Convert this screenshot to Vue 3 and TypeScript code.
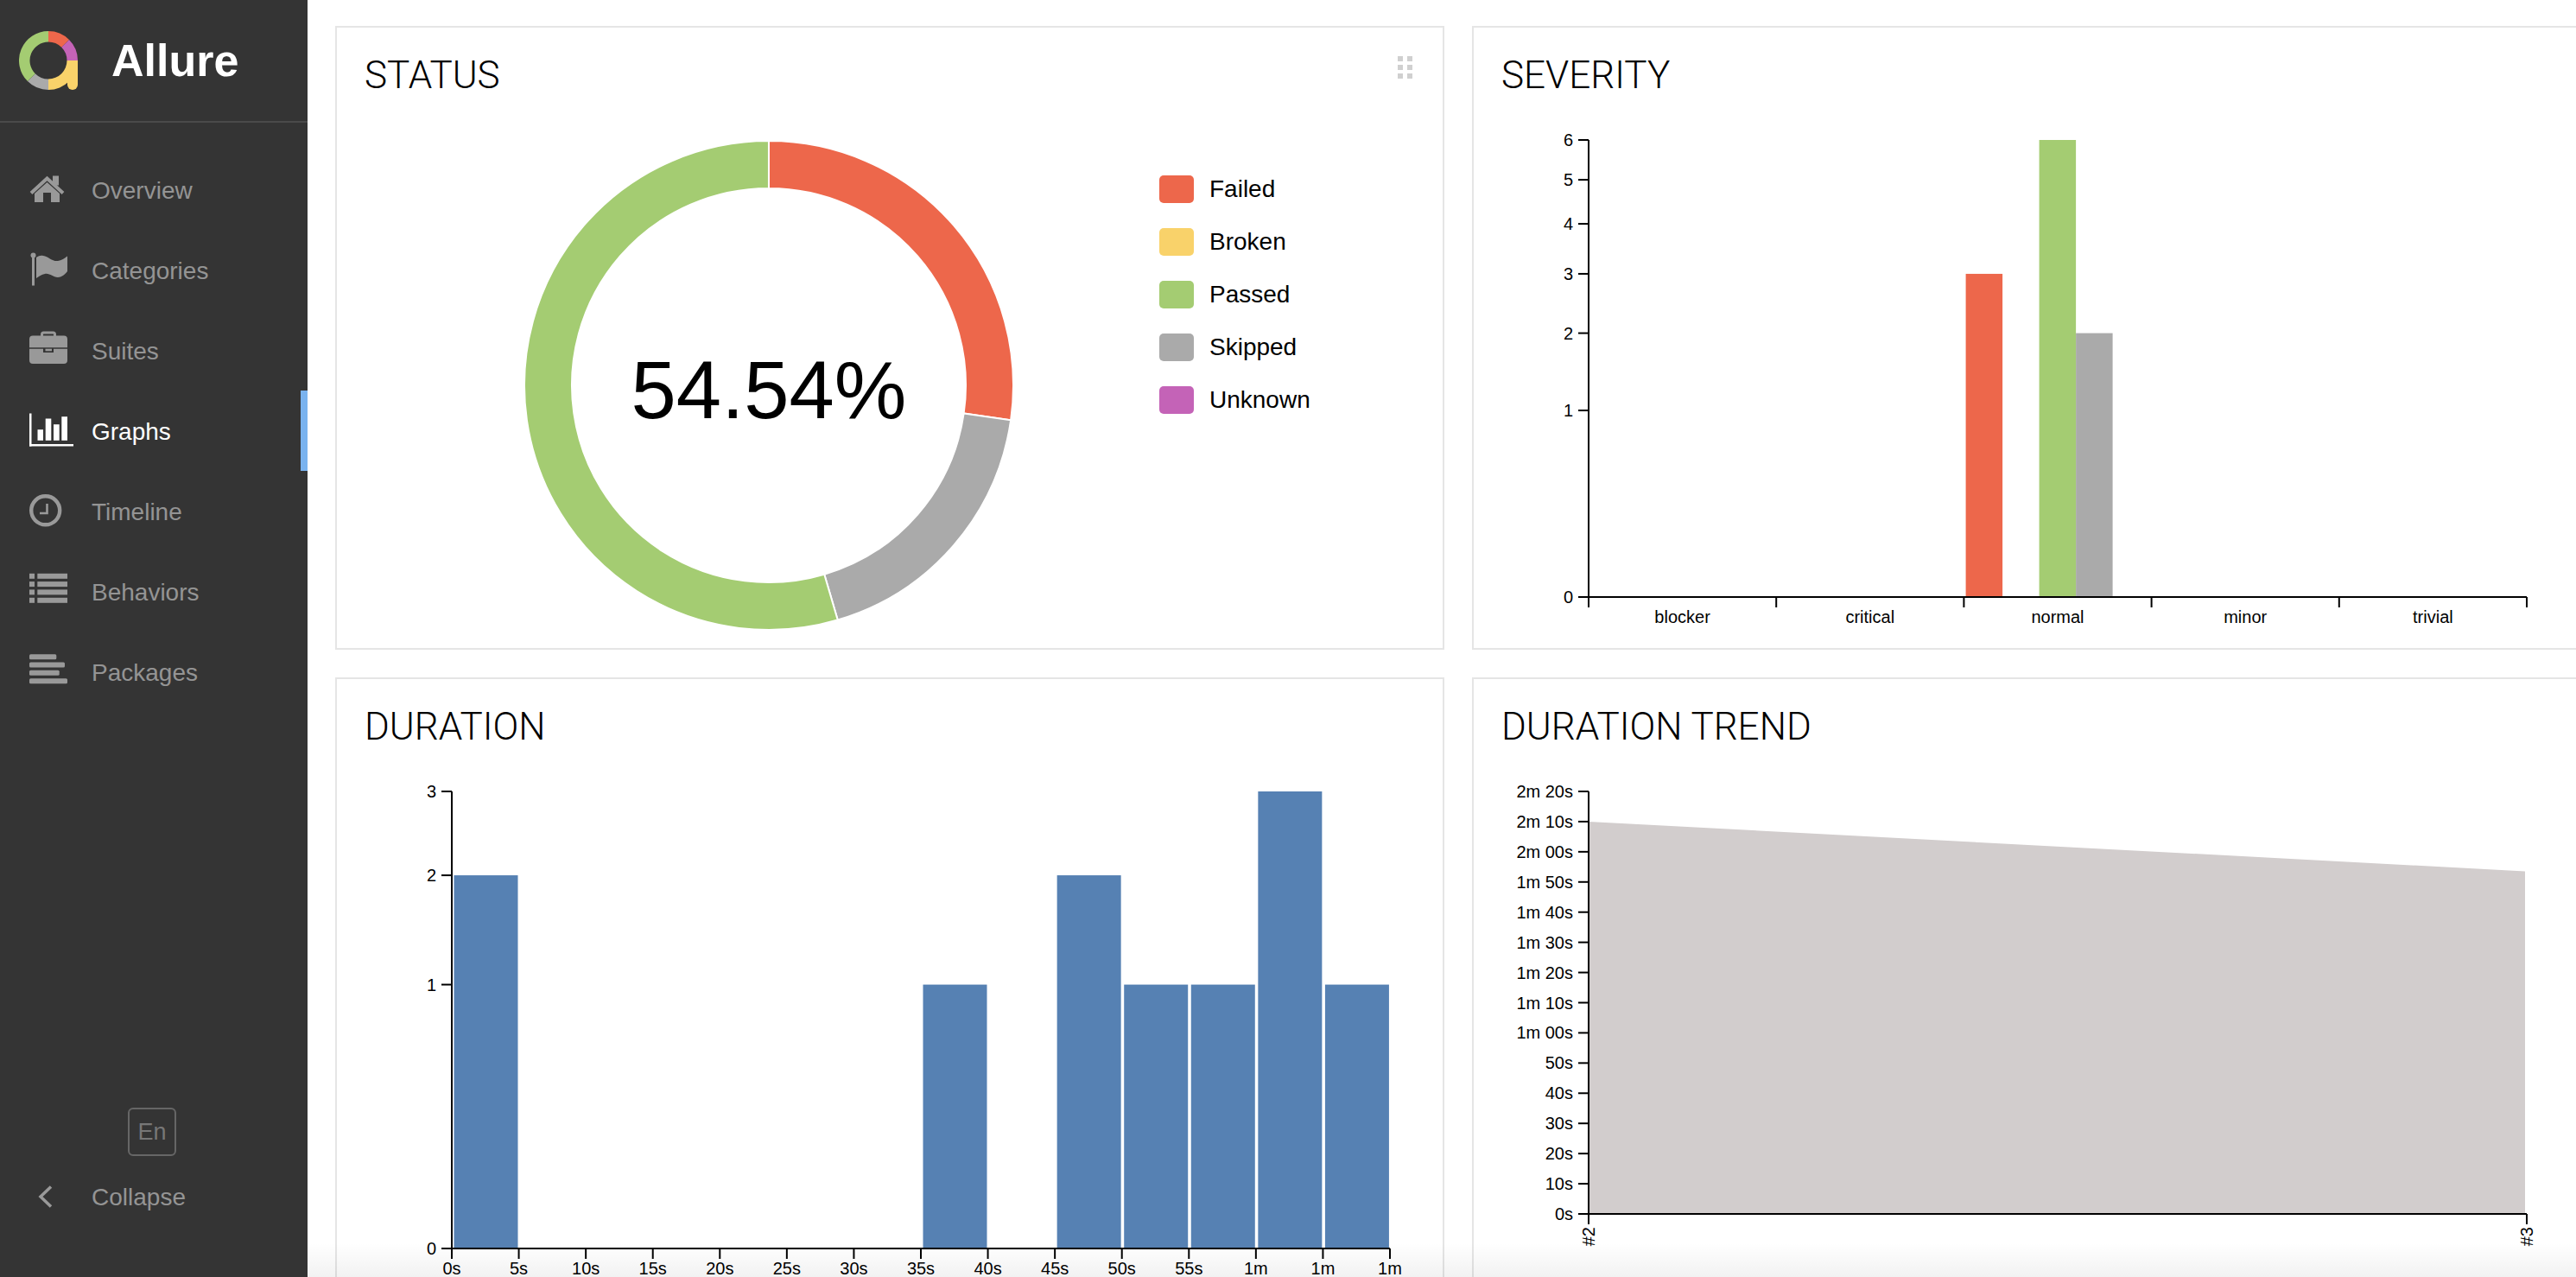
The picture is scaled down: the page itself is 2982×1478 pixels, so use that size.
<script setup lang="ts">
interface Tick {
  y: number
  label: string
}

const CHART_LEFT = 133
const CHART_WIDTH = 1086
const CHART_TOP = 30

const colors = {
  failed: '#ed674b',
  broken: '#f9d26a',
  passed: '#a4cc72',
  skipped: '#aaaaaa',
  unknown: '#c463b7'
}

const navItems = [
  { name: 'Overview', icon: 'home' },
  { name: 'Categories', icon: 'flag' },
  { name: 'Suites', icon: 'suitcase' },
  { name: 'Graphs', icon: 'graph' },
  { name: 'Timeline', icon: 'clock' },
  { name: 'Behaviors', icon: 'list' },
  { name: 'Packages', icon: 'packages' }
]

const legend = [
  { name: 'Failed', color: colors.failed },
  { name: 'Broken', color: colors.broken },
  { name: 'Passed', color: colors.passed },
  { name: 'Skipped', color: colors.skipped },
  { name: 'Unknown', color: colors.unknown }
]

// ring slice, angles in degrees clockwise from the top
const arc = (cx: number, cy: number, r: number, inner: number, from: number, to: number) => {
  const pt = (rad: number, deg: number) => {
    const a = (deg * Math.PI) / 180
    return `${(cx + rad * Math.sin(a)).toFixed(2)} ${(cy - rad * Math.cos(a)).toFixed(2)}`
  }
  const large = to - from > 180 ? 1 : 0
  return `M${pt(r, from)}A${r} ${r} 0 ${large} 1 ${pt(r, to)}L${pt(inner, to)}A${inner} ${inner} 0 ${large} 0 ${pt(inner, from)}Z`
}

const logoSlices = [
  { color: colors.failed, from: 0, to: 45 },
  { color: colors.unknown, from: 45, to: 90 },
  { color: colors.broken, from: 90, to: 180 },
  { color: colors.skipped, from: 180, to: 225 },
  { color: colors.passed, from: 225, to: 360 }
].map((s) => ({ color: s.color, d: arc(34, 34, 34, 21.5, s.from, s.to) }))

const donut = [
  { color: colors.failed, from: 0, to: (3 / 11) * 360 },
  { color: colors.skipped, from: (3 / 11) * 360, to: (5 / 11) * 360 },
  { color: colors.passed, from: (5 / 11) * 360, to: 359.99 }
].map((s) => ({ color: s.color, d: arc(500, 314, 283, 228, s.from, s.to) }))

const sqrtY = (value: number, max: number) => 559 - 529 * Math.sqrt(value / max)

const severityTicks: Tick[] = [0, 1, 2, 3, 4, 5, 6].map((v) => ({ y: sqrtY(v, 6), label: String(v) }))
const severityBands = ['blocker', 'critical', 'normal', 'minor', 'trivial']
const bandWidth = CHART_WIDTH / severityBands.length
const severityBars = [
  { slot: 0, value: 3, color: colors.failed },
  { slot: 2, value: 6, color: colors.passed },
  { slot: 3, value: 2, color: colors.skipped }
].map((b) => ({
  x: CHART_LEFT + 2 * bandWidth + 2.2 + b.slot * 42.5,
  y: sqrtY(b.value, 6),
  h: 559 - sqrtY(b.value, 6),
  color: b.color
}))

const durationTicks: Tick[] = [0, 1, 2, 3].map((v) => ({ y: sqrtY(v, 3), label: String(v) }))
const durationLabels = ['0s', '5s', '10s', '15s', '20s', '25s', '30s', '35s', '40s', '45s', '50s', '55s', '1m', '1m', '1m']
const durationStep = CHART_WIDTH / (durationLabels.length - 1)
const durationBars = [
  { slot: 0, value: 2 },
  { slot: 7, value: 1 },
  { slot: 9, value: 2 },
  { slot: 10, value: 1 },
  { slot: 11, value: 1 },
  { slot: 12, value: 3 },
  { slot: 13, value: 1 }
].map((b) => ({
  x: CHART_LEFT + b.slot * durationStep + 2.5,
  y: sqrtY(b.value, 3),
  h: 559 - sqrtY(b.value, 3)
}))

const trendLabels = ['0s', '10s', '20s', '30s', '40s', '50s', '1m 00s', '1m 10s', '1m 20s', '1m 30s', '1m 40s', '1m 50s', '2m 00s', '2m 10s', '2m 20s']
const trendTicks: Tick[] = trendLabels.map((label, i) => ({ y: 519 - (i * 489) / 14, label }))
</script>

<template>
  <div class="page">
    <aside class="side">
      <div class="brand">
        <svg class="logo" width="68" height="68" viewBox="0 0 68 68">
          <path v-for="s in logoSlices" :key="s.color" :d="s.d" :fill="s.color" />
          <path d="M56 34H68V62A6 6 0 0 1 56 62Z" :fill="colors.broken" />
        </svg>
        <span class="brand-name">Allure</span>
      </div>

      <nav class="menu">
        <a v-for="item in navItems" :key="item.name" class="menu-item" :class="{ active: item.name === 'Graphs' }">
          <svg class="menu-icon" width="56" height="56" viewBox="0 0 56 56">
            <g v-if="item.icon === 'home'">
              <path d="M4 31.5L22.5 14.5L41 31.5" fill="none" stroke="currentColor" stroke-width="4" />
              <path d="M8 32L22.5 19L37 32V42H27V31H18V42H8Z" fill="currentColor" />
              <rect x="29" y="11.5" width="7" height="11" fill="currentColor" />
            </g>
            <g v-else-if="item.icon === 'flag'">
              <rect x="5" y="9" width="3" height="36.5" fill="currentColor" />
              <circle cx="6.5" cy="10.5" r="3" fill="currentColor" />
              <path d="M10 13C13 11 15 10.5 18 11C24 12 29 18 35 17C39 16.5 43 14 46 11.5V29C43 33 39 36 35 36C29 36 26 31 20 32C16 32.5 13 35 10 37Z" fill="currentColor" />
            </g>
            <g v-else-if="item.icon === 'suitcase'">
              <rect x="16.5" y="7" width="15" height="7" rx="2" fill="none" stroke="currentColor" stroke-width="3" />
              <path d="M6 10.5H42A4 4 0 0 1 46 14.5V24.2H2V14.5A4 4 0 0 1 6 10.5Z" fill="currentColor" />
              <path d="M2 25.7H18V30H30V25.7H46V39A4 4 0 0 1 42 43H6A4 4 0 0 1 2 39Z" fill="currentColor" />
              <rect x="20.5" y="25.7" width="7.5" height="2.6" fill="currentColor" />
            </g>
            <g v-else-if="item.icon === 'graph'">
              <rect x="2" y="7.5" width="2.5" height="38" fill="currentColor" />
              <rect x="2" y="43" width="51" height="2.5" fill="currentColor" />
              <rect x="11.5" y="26.2" width="6.5" height="12.6" fill="currentColor" />
              <rect x="20.7" y="13.5" width="6.6" height="25.3" fill="currentColor" />
              <rect x="30" y="20.2" width="6.7" height="18.6" fill="currentColor" />
              <rect x="39.3" y="11.2" width="6.7" height="27.6" fill="currentColor" />
            </g>
            <g v-else-if="item.icon === 'clock'">
              <circle cx="20.7" cy="26.8" r="16.5" fill="none" stroke="currentColor" stroke-width="4.4" />
              <path d="M22.5 19V30H14" fill="none" stroke="currentColor" stroke-width="2.6" />
            </g>
            <g v-else-if="item.icon === 'list'">
              <template v-for="y in [6.8, 16.1, 25.4, 34.8]" :key="y">
                <rect x="2" :y="y" width="6" height="6" fill="currentColor" />
                <rect x="11.3" :y="y" width="34.7" height="6" fill="currentColor" />
              </template>
            </g>
            <g v-else>
              <rect x="2" y="7.2" width="31.3" height="6" rx="1.5" fill="currentColor" />
              <rect x="2" y="16.5" width="41" height="6" rx="1.5" fill="currentColor" />
              <rect x="2" y="25.8" width="34.7" height="6" rx="1.5" fill="currentColor" />
              <rect x="2" y="35.2" width="44" height="6" rx="1.5" fill="currentColor" />
            </g>
          </svg>
          <span class="menu-label">{{ item.name }}</span>
        </a>
      </nav>

      <div class="side-footer">
        <button class="lang">En</button>
        <a class="menu-item">
          <svg class="menu-icon" width="56" height="56" viewBox="0 0 56 56">
            <path d="M27 16.5L15 28L27 39.5" fill="none" stroke="currentColor" stroke-width="3.5" />
          </svg>
          <span class="menu-label">Collapse</span>
        </a>
      </div>
    </aside>

    <main class="content">
      <div class="grid">
        <section class="card">
          <h2 class="card-title">STATUS</h2>
          <div class="drag-handle">
            <i v-for="n in 6" :key="n"></i>
          </div>
          <div class="status-body">
            <svg class="donut" width="952" height="618" viewBox="0 0 952 618">
              <path v-for="s in donut" :key="s.color" :d="s.d" :fill="s.color" stroke="#fff" stroke-width="2" />
              <text x="500" y="352" text-anchor="middle" class="donut-label">54.54%</text>
            </svg>
            <ul class="legend">
              <li v-for="l in legend" :key="l.name">
                <span class="swatch" :style="{ background: l.color }"></span>
                {{ l.name }}
              </li>
            </ul>
          </div>
        </section>

        <section class="card">
          <h2 class="card-title">SEVERITY</h2>
          <svg class="chart" width="1280" height="618" viewBox="0 0 1280 618">
            <rect v-for="b in severityBars" :key="b.x" :x="b.x" :y="b.y" width="42.5" :height="b.h" :fill="b.color" />
            <g class="axis">
              <path :d="`M${CHART_LEFT} ${CHART_TOP}V559H${CHART_LEFT + CHART_WIDTH}`" />
              <template v-for="t in severityTicks" :key="t.label">
                <path :d="`M121 ${t.y}H${CHART_LEFT}`" />
                <text x="115" :y="t.y + 7" text-anchor="end">{{ t.label }}</text>
              </template>
              <path v-for="i in 6" :key="i" :d="`M${CHART_LEFT + (i - 1) * bandWidth} 559v12`" />
              <text v-for="(b, i) in severityBands" :key="b" :x="CHART_LEFT + (i + 0.5) * bandWidth" y="589" text-anchor="middle">{{ b }}</text>
            </g>
          </svg>
        </section>

        <section class="card">
          <h2 class="card-title">DURATION</h2>
          <svg class="chart" width="1280" height="618" viewBox="0 0 1280 618">
            <rect v-for="b in durationBars" :key="b.x" :x="b.x" :y="b.y" width="74" :height="b.h" fill="#5681b3" />
            <g class="axis">
              <path :d="`M${CHART_LEFT} ${CHART_TOP}V559H${CHART_LEFT + CHART_WIDTH}`" />
              <template v-for="t in durationTicks" :key="t.label">
                <path :d="`M121 ${t.y}H${CHART_LEFT}`" />
                <text x="115" :y="t.y + 7" text-anchor="end">{{ t.label }}</text>
              </template>
              <template v-for="(l, i) in durationLabels" :key="i">
                <path :d="`M${CHART_LEFT + i * durationStep} 559v12`" />
                <text :x="CHART_LEFT + i * durationStep" y="589" text-anchor="middle">{{ l }}</text>
              </template>
            </g>
          </svg>
        </section>

        <section class="card">
          <h2 class="card-title">DURATION TREND</h2>
          <svg class="chart" width="1280" height="618" viewBox="0 0 1280 618">
            <path d="M133 65L1217 122.4V519H133Z" fill="#d2cdcd" />
            <g class="axis">
              <path :d="`M${CHART_LEFT} ${CHART_TOP}V519H${CHART_LEFT + CHART_WIDTH}`" />
              <template v-for="t in trendTicks" :key="t.label">
                <path :d="`M121 ${t.y}H${CHART_LEFT}`" />
                <text x="115" :y="t.y + 7" text-anchor="end">{{ t.label }}</text>
              </template>
              <path :d="`M${CHART_LEFT} 519v12M${CHART_LEFT + CHART_WIDTH} 519v12`" />
              <text text-anchor="end" :transform="`translate(${CHART_LEFT + 7} 534) rotate(-90)`">#2</text>
              <text text-anchor="end" :transform="`translate(${CHART_LEFT + CHART_WIDTH + 7} 534) rotate(-90)`">#3</text>
            </g>
          </svg>
        </section>
      </div>
      <div class="bottom-fade"></div>
    </main>
  </div>
</template>

<style scoped>
.page {
  display: flex;
  height: 100vh;
  overflow: hidden;
  font-family: "Liberation Sans", Arial, sans-serif;
  background: #fff;
}

.side {
  display: flex;
  flex-direction: column;
  flex: 0 0 356px;
  background: #343434;
  color: #949494;
}

.brand {
  display: flex;
  align-items: center;
  height: 140px;
  padding-left: 22px;
  border-bottom: 2px solid #4a4a4a;
}

.logo {
  margin-right: 39px;
}

.brand-name {
  color: #fff;
  font-size: 52px;
  font-weight: 700;
}

.menu {
  margin-top: 31px;
}

.menu-item {
  display: flex;
  align-items: center;
  height: 93px;
  padding-left: 32px;
  font-size: 28px;
}

.menu-label {
  padding-top: 2px;
}

.menu-icon {
  flex: none;
  margin-right: 18px;
  color: #999;
}

.menu-item.active {
  color: #fff;
  border-right: 8px solid #7ab3ef;
}

.menu-item.active .menu-icon {
  color: #fff;
}

.side-footer {
  margin-top: auto;
  padding-bottom: 47px;
}

.lang {
  display: block;
  width: 56px;
  height: 56px;
  margin-left: 148px;
  padding: 0;
  border: 2px solid #666;
  border-radius: 6px;
  background: none;
  color: #777;
  font-family: inherit;
  font-size: 27px;
}

.content {
  position: relative;
  flex: 1;
  min-width: 0;
  padding: 30px 0 0 32px;
}

.grid {
  display: grid;
  grid-template-columns: 1284px 1284px;
  grid-auto-rows: 722px;
  gap: 32px;
}

.card {
  position: relative;
  box-sizing: border-box;
  border: 2px solid #e5e5e5;
  background: #fff;
}

.card-title {
  height: 100px;
  margin: 0;
  padding: 29px 0 0 32px;
  box-sizing: border-box;
  color: #000;
  font-family: Roboto, "Liberation Sans", sans-serif;
  font-size: 44px;
  font-weight: 300;
  line-height: 52px;
}

.drag-handle {
  position: absolute;
  top: 33px;
  right: 35px;
  display: grid;
  grid-template-columns: 6px 6px;
  grid-auto-rows: 6px;
  gap: 4px 5px;
}

.drag-handle i {
  background: #d0d0d0;
}

.status-body {
  display: flex;
  align-items: flex-start;
}

.donut {
  flex: none;
}

.donut-label {
  font-size: 94px;
}

.legend {
  margin: 56px 0 0;
  padding: 0;
  list-style: none;
  color: #000;
  font-size: 28px;
}

.legend li {
  display: flex;
  align-items: center;
  height: 61px;
}

.swatch {
  width: 40px;
  height: 32px;
  margin-right: 18px;
  border-radius: 5px;
}

.chart {
  display: block;
}

.axis path {
  fill: none;
  stroke: #000;
  stroke-width: 2;
}

.axis text {
  fill: #000;
  font-size: 20px;
}

.bottom-fade {
  position: absolute;
  right: 0;
  bottom: 0;
  left: 0;
  height: 40px;
  background: linear-gradient(rgba(0, 0, 0, 0), rgba(0, 0, 0, 0.05));
  pointer-events: none;
}
</style>

<style>
html,
body {
  margin: 0;
  overflow: hidden;
}
</style>
